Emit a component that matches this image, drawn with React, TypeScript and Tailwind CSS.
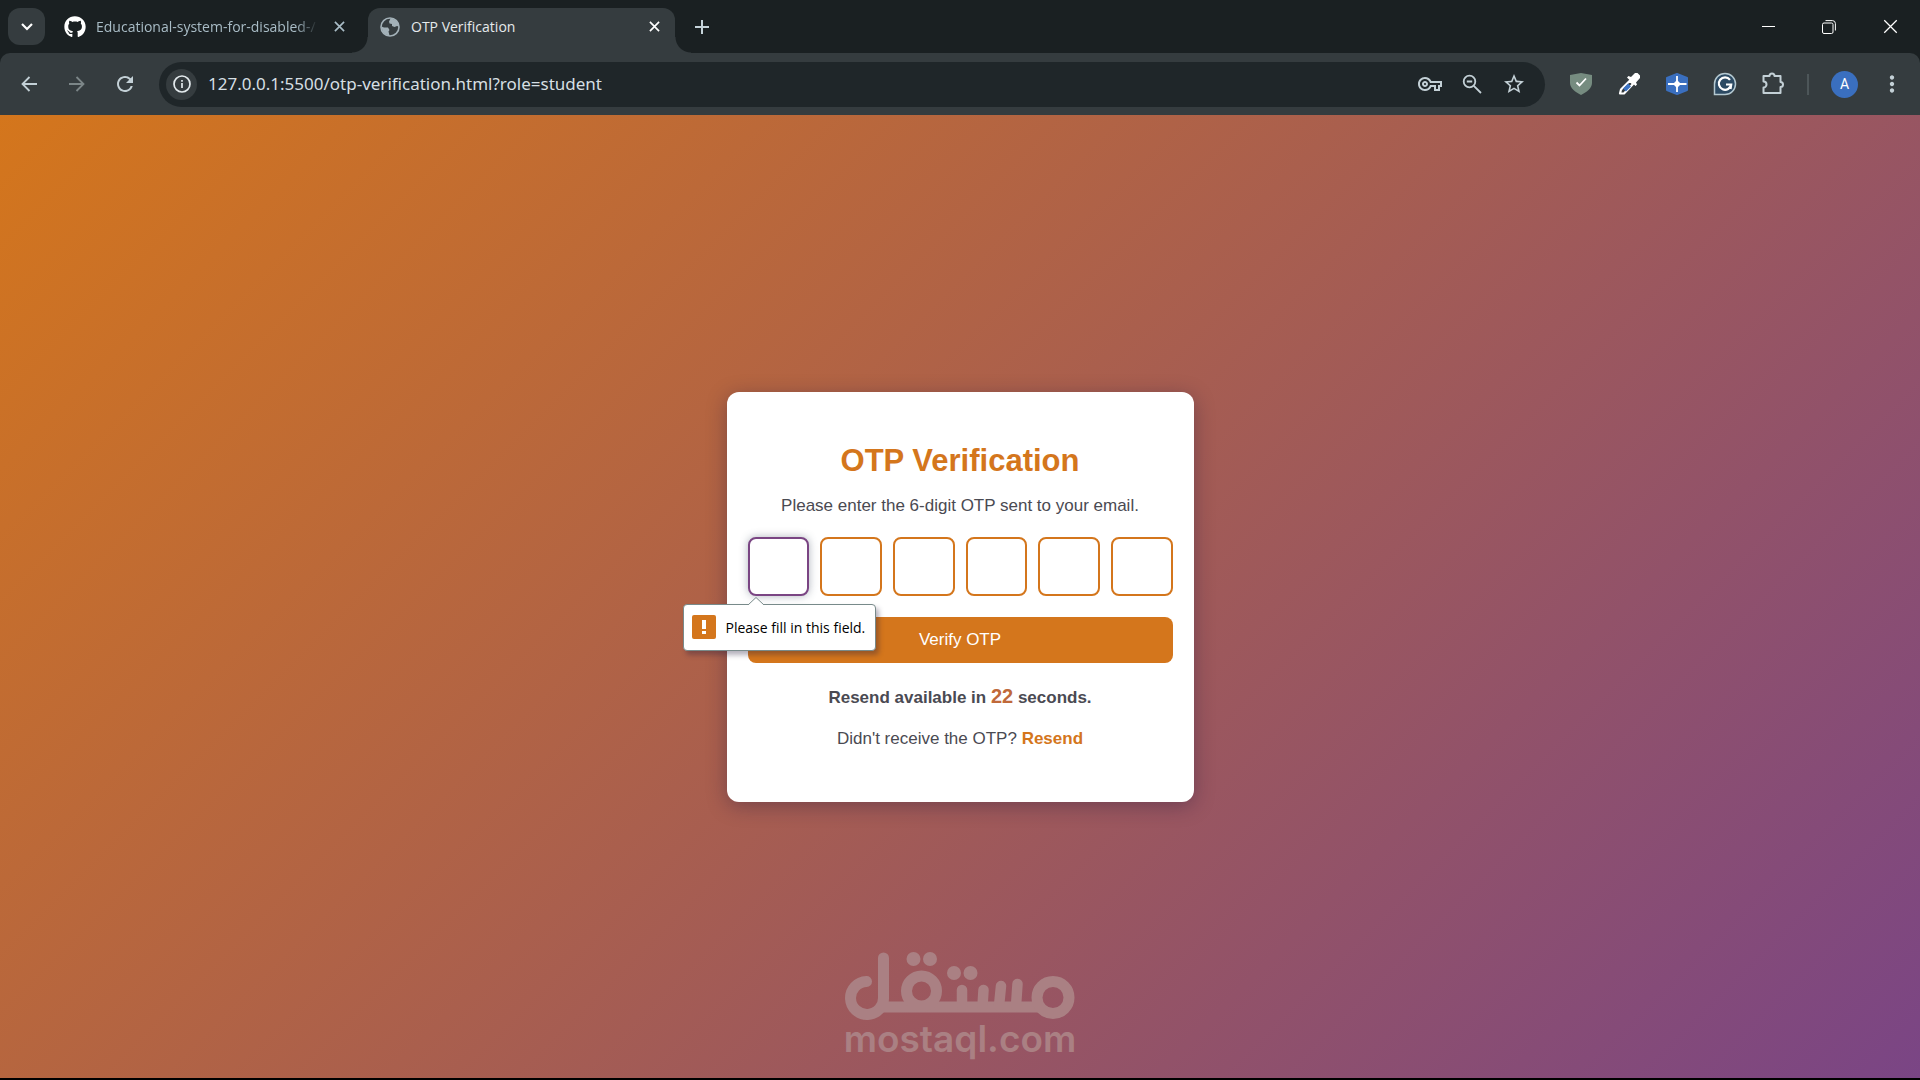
import React, { useState } from "react";
import { FaGithub } from "react-icons/fa";
import { MdRefresh, MdStarBorder, MdMoreVert, MdOutlineVpnKey } from "react-icons/md";

function CrossIcon({ className }: { className: string }) {
  return (
    <svg viewBox="0 0 12 12" className={className} fill="none" stroke="currentColor" aria-hidden="true">
      <path d="M1 1 11 11M11 1 1 11" />
    </svg>
  );
}

function GlobeIcon() {
  return (
    <svg viewBox="0 0 20 20" className="h-5 w-5 shrink-0 text-[#a3b1b8]" fill="none" stroke="currentColor" strokeWidth="1.6" aria-hidden="true">
      <circle cx="10" cy="10" r="9" />
      <path d="M10.500 1.500 9 4.500 9.500 6.500 12 7 12 9 14.500 10 17 9 18.500 9.500 18 5.500 15 2.500Z" fill="currentColor" stroke="none" />
      <path d="M1.500 9.500 4 10.500 8 10.500 9.500 13 8.500 14.500 9.500 18.500 5.500 17.500 2.500 14.500Z" fill="currentColor" stroke="none" />
    </svg>
  );
}

function TabStrip() {
  return (
    <div className="flex h-[53px] items-start pl-2">
      <button aria-label="Search tabs" className="mt-2 flex h-[37px] w-[37px] shrink-0 items-center justify-center rounded-xl bg-[#353c3f] text-white">
        <svg viewBox="0 0 12 8" className="h-2 w-3" fill="none" stroke="currentColor" strokeWidth="2.2" aria-hidden="true">
          <path d="M1 1 6 6 11 1" />
        </svg>
      </button>
      <div className="flex h-[53px] w-[323px] items-center pr-[23px] pl-[19px] text-[#a9bcc6]">
        <FaGithub className="h-[22px] w-[22px] shrink-0 text-white" aria-hidden="true" />
        <span className="mr-4 ml-[10px] flex-1 overflow-hidden font-['Open_Sans',sans-serif] text-[14px] whitespace-nowrap [mask-image:linear-gradient(to_right,black_200px,transparent_222px)]">
          Educational-system-for-disabled-/
        </span>
        <button aria-label="Close tab">
          <CrossIcon className="h-[11px] w-[11px] stroke-[1.8]" />
        </button>
      </div>
      <div className="relative mt-2 flex h-[45px] w-[307px] items-center rounded-t-xl bg-[#353c3f] pr-[15px] pb-2 pl-3 text-white">
        <span className="absolute bottom-0 -left-4 h-4 w-4 bg-[radial-gradient(circle_at_0_0,transparent_15px,#353c3f_16px)]" />
        <span className="absolute -right-4 bottom-0 h-4 w-4 bg-[radial-gradient(circle_at_100%_0,transparent_15px,#353c3f_16px)]" />
        <GlobeIcon />
        <span className="ml-[11px] flex-1 font-['Open_Sans',sans-serif] text-[14px] text-[#e6eaec]">OTP Verification</span>
        <button aria-label="Close tab">
          <CrossIcon className="h-[11px] w-[11px] stroke-[1.8]" />
        </button>
      </div>
      <button aria-label="New tab" className="mt-5 ml-5 text-[#c5d3da]">
        <svg viewBox="0 0 14 14" className="h-[14px] w-[14px]" fill="none" stroke="currentColor" strokeWidth="2" aria-hidden="true">
          <path d="M7 0V14M0 7H14" />
        </svg>
      </button>
      <div className="ml-auto flex h-[53px] items-center gap-[47px] pr-[22px] text-white">
        <button aria-label="Minimize">
          <svg viewBox="0 0 13 13" className="h-[13px] w-[13px]" stroke="currentColor" aria-hidden="true">
            <path d="M0 6.5H13" />
          </svg>
        </button>
        <button aria-label="Restore">
          <svg viewBox="0 0 14 14" className="h-[14px] w-[14px]" fill="none" stroke="currentColor" aria-hidden="true">
            <rect x="0.5" y="3" width="10.5" height="10.5" rx="1.5" />
            <path d="M3.5 .6H10.5A3 3 0 0 1 13.4 3.5V10.5" />
          </svg>
        </button>
        <button aria-label="Close window">
          <CrossIcon className="h-[15px] w-[15px] stroke-1" />
        </button>
      </div>
    </div>
  );
}

function Toolbar() {
  const [url, setUrl] = useState("127.0.0.1:5500/otp-verification.html?role=student");
  return (
    <div className="flex h-[62px] items-center rounded-t-[10px] bg-[#353c3f] pr-[15px] pl-[21px] text-[#c3d0d6]">
      <button aria-label="Back">
        <svg viewBox="0 0 16 16" className="h-4 w-4" fill="none" stroke="currentColor" strokeWidth="1.8" aria-hidden="true">
          <path d="M16 8H1.5M8.5 1 1.5 8l7 7" />
        </svg>
      </button>
      <button aria-label="Forward" className="ml-8 text-[#7c8688]">
        <svg viewBox="0 0 16 16" className="h-4 w-4" fill="none" stroke="currentColor" strokeWidth="1.8" aria-hidden="true">
          <path d="M0 8H14.5M7.5 1 14.5 8l-7 7" />
        </svg>
      </button>
      <button aria-label="Reload" className="ml-7">
        <MdRefresh className="h-6 w-6" />
      </button>
      <div className="ml-[22px] flex h-[45px] flex-1 items-center rounded-full bg-[#1f2629] pr-[19px] pl-[7px]">
        <button aria-label="Site information" className="flex h-[31px] w-[31px] items-center justify-center rounded-full bg-[#353c3f] text-[#e3eaed]">
          <svg viewBox="0 0 18 18" className="h-[18px] w-[18px]" fill="none" stroke="currentColor" strokeWidth="1.7" aria-hidden="true">
            <circle cx="9" cy="9" r="8" />
            <path d="M9 8V13M9 5V6.7" />
          </svg>
        </button>
        <input
          aria-label="Address"
          value={url}
          onChange={(e) => setUrl(e.target.value)}
          className="ml-[11px] min-w-0 flex-1 bg-transparent font-['Noto_Sans',sans-serif] text-[17px] text-[#d6dfe3] outline-none"
        />
        <div className="flex items-center gap-[18px]">
          <button aria-label="Passwords"><MdOutlineVpnKey className="h-6 w-6" /></button>
          <button aria-label="Zoom">
            <svg viewBox="0 0 24 24" className="h-6 w-6" fill="none" stroke="currentColor" strokeWidth="1.8" aria-hidden="true">
              <circle cx="9.5" cy="9.5" r="5.8" />
              <path d="M13.8 13.8 21 21M6.8 9.5H12.200" />
            </svg>
          </button>
          <button aria-label="Bookmark"><MdStarBorder className="h-6 w-6" /></button>
        </div>
      </div>
      <div className="ml-6 flex items-center gap-6">
        <button aria-label="Shield extension">
          <svg viewBox="0 0 24 24" className="h-6 w-6" aria-hidden="true">
            <path d="M12 1 23 3V11C23 16 18 20 12 23 6 20 1 16 1 11V3Z" fill="#768c80" />
            <path d="M7.500 10.500 10.500 13.500 17 6.500" fill="none" stroke="#fff" strokeWidth="1.800" />
          </svg>
        </button>
        <button aria-label="Colour picker extension">
          <svg viewBox="0 0 24 24" className="h-6 w-6" aria-hidden="true">
            <path d="M13 8.500 4 17.500 3 21.500H7L16 12Z" fill="#353c3f" stroke="#fff" strokeWidth="2.200" strokeLinejoin="round" />
            <path d="M12.500 13 7.500 18" stroke="#3b73c4" strokeWidth="4" />
            <path d="M10 5.500 18.500 14 20 12.500 19 10.500 23 6V3.500L20.500 1H18L14 5 11.500 4Z" fill="#fff" />
          </svg>
        </button>
        <button aria-label="Sparkle extension">
          <svg viewBox="0 0 24 24" className="h-6 w-6" aria-hidden="true">
            <path d="M12 2 22 6V18L12 22 2 18V6Z" fill="#3a6fbf" stroke="#3a6fbf" strokeWidth="2" strokeLinejoin="round" />
            <path d="M12 4V20M3 12H21.500" stroke="#fff" strokeWidth="1.800" />
            <path d="M12 8 16 12 12 16 8 12Z" fill="#fff" />
          </svg>
        </button>
        <button aria-label="Writing extension">
          <svg viewBox="0 0 24 24" className="h-6 w-6" fill="none" aria-hidden="true">
            <path d="M1.500 22.500V12A10.500 10.500 0 1 1 12 22.500Z" fill="#2c4a63" stroke="#b4c8d0" strokeWidth="1.500" />
            <path d="M17 7.800A6.200 6.200 0 1 0 18.200 12.500H13M18.200 12.500 17.500 17" stroke="#fff" strokeWidth="2.200" />
          </svg>
        </button>
        <button aria-label="Extensions">
          <svg viewBox="0 0 24 24" className="h-6 w-6" fill="none" stroke="currentColor" strokeWidth="2" strokeLinejoin="round" aria-hidden="true">
            <path d="M2.500 4H8.500A2.300 2.300 0 0 1 13.500 4H19.500V10A2.300 2.300 0 0 1 19.500 15V21H2.500V15.500A3 3 0 0 0 2.500 9.500Z" />
          </svg>
        </button>
      </div>
      <span className="mx-[22px] h-[21px] w-[2px] bg-[#4d5659]" />
      <button aria-label="Profile" className="flex h-[27px] w-[27px] items-center justify-center rounded-full bg-[#3a6fbf] font-['Roboto',sans-serif] text-[14px] text-white">A</button>
      <button aria-label="Menu" className="ml-[21px]"><MdMoreVert className="h-[26px] w-[26px]" /></button>
    </div>
  );
}

function Watermark() {
  return (
    <div className="absolute inset-x-0 bottom-[21px] flex flex-col items-center text-[#aa8083]">
      <svg viewBox="0 0 230 68" className="h-[68px] w-[230px]" fill="none" stroke="currentColor" strokeWidth="11" strokeLinecap="round" role="img" aria-label="مستقل">
        <path d="M21.5 29.5A16.5 16.5 0 1 0 38.5 45V6" />
        <path d="M36 55H196" strokeLinecap="butt" />
        <circle cx="76.5" cy="39" r="15" />
        <circle cx="208" cy="45.5" r="16" />
        <path d="M117 38V54M138.5 38 137.500 54M156 34 154 54M172.500 32 171 54" strokeWidth="10.500" />
        <g fill="currentColor" stroke="none">
          <circle cx="68.5" cy="7" r="7" />
          <circle cx="85" cy="7" r="7" />
          <circle cx="109" cy="21" r="7" />
          <circle cx="125.5" cy="21" r="7" />
        </g>
      </svg>
      <span className="font-['Inter',sans-serif] text-[37px] leading-[37px] font-semibold">mostaql.com</span>
    </div>
  );
}

function OtpCard() {
  const [digits, setDigits] = useState(["", "", "", "", "", ""]);
  return (
    <form
      onSubmit={(e) => e.preventDefault()}
      className="w-[467px] rounded-xl bg-white px-[21px] pt-[51px] pb-[51px] text-center text-[17px] text-[#4a4a52] shadow-[0_4px_20px_rgba(30,20,60,0.35)]"
    >
      <h1 className="text-[31px] leading-9 font-bold text-[#d4761c]">OTP Verification</h1>
      <p className="mt-[17px] leading-5">Please enter the 6-digit OTP sent to your email.</p>
      <div className="mt-[21px] grid grid-cols-6 gap-[11px]">
        {digits.map((digit, i) => (
          <div key={i} className="relative">
            <input
              aria-label={`Digit ${i + 1}`}
              maxLength={1}
              value={digit}
              onChange={(e) => setDigits(digits.map((d, j) => (j === i ? e.target.value : d)))}
              className={
                i === 0
                  ? "block h-[59px] w-full rounded-lg border-2 border-[#7a4583] bg-white text-center text-2xl shadow-[0_0_9px_rgba(80,90,110,0.45)] outline-none"
                  : "block h-[59px] w-full rounded-lg border-2 border-[#d4761c] bg-white text-center text-2xl outline-none"
              }
            />
            {i === 0 && (
              <div role="alert" className="absolute top-[67px] -left-[65px] z-10 flex h-[47px] items-center rounded border border-[#788a8a] bg-white pr-[10px] pl-2 font-['Open_Sans',sans-serif] text-[14px] whitespace-nowrap text-black shadow-[3px_4px_5px_rgba(40,30,60,0.35)]">
                <svg viewBox="0 0 16 8" className="absolute -top-2 left-16 h-2 w-4" aria-hidden="true">
                  <path d="M0 8 8 .5 16 8" fill="#fff" stroke="#788a8a" />
                </svg>
                <span className="mr-[10px] flex h-6 w-6 items-center justify-center rounded-xs bg-[#d4761c]">
                  <svg viewBox="0 0 4 14" className="h-[14px] w-1" fill="#fff" aria-hidden="true">
                    <path d="M0 0H4V9H0ZM0 11H4V14H0Z" />
                  </svg>
                </span>
                Please fill in this field.
              </div>
            )}
          </div>
        ))}
      </div>
      <button type="submit" className="mt-[21px] h-[46px] w-full rounded-lg bg-[#d4761c] text-[17px] text-white">Verify OTP</button>
      <p className="mt-[21px] leading-6 font-bold">
        Resend available in <span className="text-[20px] text-[#c0693a]">22</span> seconds.
      </p>
      <p className="mt-[17px] leading-6">
        Didn't receive the OTP? <a href="#resend" className="font-bold text-[#d4761c]">Resend</a>
      </p>
    </form>
  );
}

export default function App() {
  return (
    <div className="flex min-h-screen flex-col border-b-2 border-black bg-[#1a2022] font-['Liberation_Sans',sans-serif]">
      <header>
        <TabStrip />
        <Toolbar />
      </header>
      <main className="relative flex flex-1 items-center justify-center bg-[linear-gradient(135deg,#d4761c,#7a4585)]">
        <OtpCard />
        <Watermark />
      </main>
    </div>
  );
}
